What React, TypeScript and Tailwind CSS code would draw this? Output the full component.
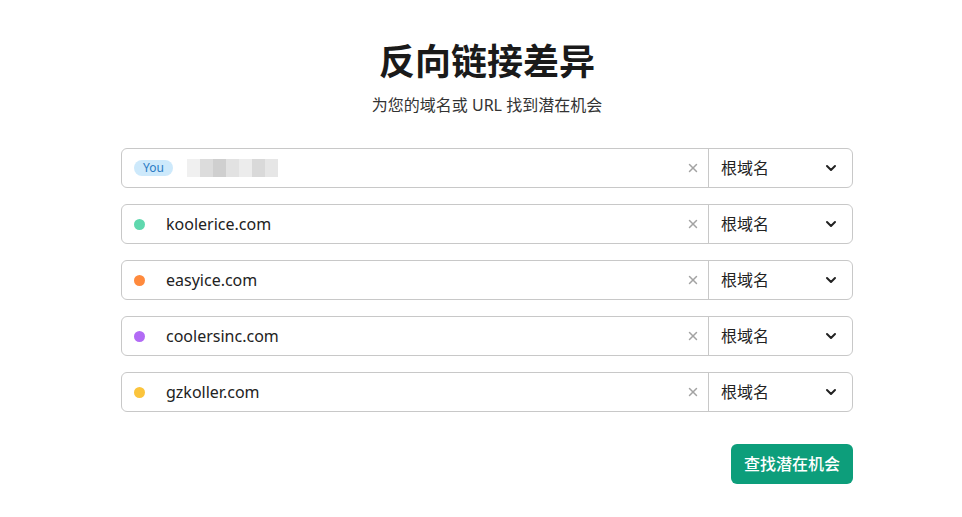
import { ChevronDown, X } from 'lucide-react'

const rows = [
  { domain: 'koolerice.com', dot: 'bg-[#5fd8ae]' },
  { domain: 'easyice.com', dot: 'bg-[#ff8a3d]' },
  { domain: 'coolersinc.com', dot: 'bg-[#b26bf5]' },
  { domain: 'gzkoller.com', dot: 'bg-[#fbc43c]' },
]

// pixelated blur of the user's own domain
const blur = [
  'bg-[#f0f0f0]',
  'bg-[#dcdcdc]',
  'bg-[#cfcfcf]',
  'bg-[#e2e2e2]',
  'bg-[#ececec]',
  'bg-[#d9d9d9]',
  'bg-[#e6e6e6]',
]

function Row({ children }: { children: React.ReactNode }) {
  return (
    <div className="flex h-10 items-stretch rounded-md border border-[#c8c8c8] bg-white">
      <div className="flex flex-1 items-center pl-3 pr-2">
        <div className="flex flex-1 items-center">{children}</div>
        <X size={14} strokeWidth={2.5} className="text-[#a3a3a3]" />
      </div>
      <div className="flex w-[144px] items-center justify-between border-l border-[#c8c8c8] pl-3 pr-[13px]">
        <span className="text-[16px] text-[#222]">根域名</span>
        <ChevronDown size={16} strokeWidth={3} className="text-[#222]" />
      </div>
    </div>
  )
}

export default function App() {
  return (
    <div
      className="min-h-screen bg-white pl-3 pt-[37px]"
      style={{ fontFamily: '"Noto Sans", "Noto Sans CJK SC", sans-serif' }}
    >
      <div className="text-center">
        <h1 className="text-[36px] font-bold leading-[50px] text-[#1a1a1a]">反向链接差异</h1>
        <p className="mt-[6px] text-[16px] text-[#333]">为您的域名或 URL 找到潜在机会</p>
      </div>

      <div className="mx-auto mt-[31px] flex w-[732px] flex-col gap-4">
        <Row>
          <span className="rounded-full bg-[#cde9fb] px-[9px] text-[12px] leading-4 text-[#2a7bc4]">You</span>
          <div className="ml-[14px] flex h-[18px]">
            {blur.map((c, i) => (
              <div key={i} className={`h-full w-[13px] ${c}`} />
            ))}
          </div>
        </Row>
        {rows.map((r) => (
          <Row key={r.domain}>
            <span className={`h-[11px] w-[11px] rounded-full ${r.dot}`} />
            <span className="ml-[21px] text-[16px] text-[#222]">{r.domain}</span>
          </Row>
        ))}

        <div className="mt-4 flex justify-end">
          <button className="h-10 rounded-md bg-[#0d9e7b] px-[13px] text-[16px] font-medium text-white">
            查找潜在机会
          </button>
        </div>
      </div>
    </div>
  )
}
